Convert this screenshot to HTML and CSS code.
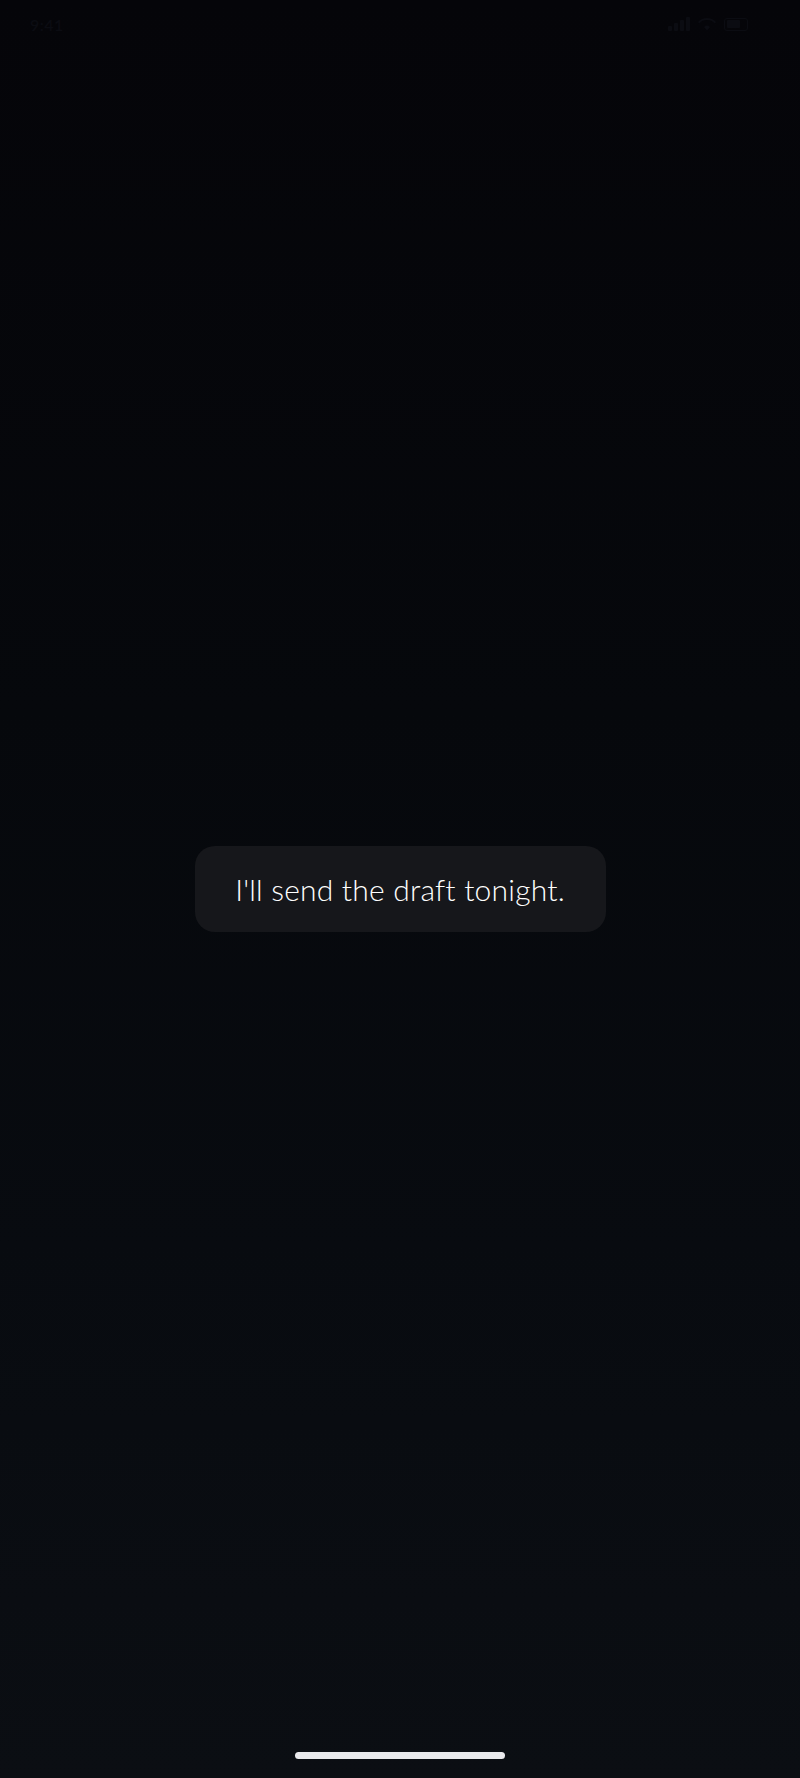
FILE: index.html
```html
<!DOCTYPE html>
<html lang="en">
<head>
<meta charset="utf-8">
<title>Message</title>
<link rel="stylesheet" href="styles.css">
</head>
<body>
<div class="screen">
  <header class="status-bar">
    <span class="time">9:41</span>
    <div class="status-icons">
      <svg class="signal" width="22" height="14" viewBox="0 0 22 14"><rect x="0" y="9" width="4" height="5" rx="1"/><rect x="6" y="6" width="4" height="8" rx="1"/><rect x="12" y="3" width="4" height="11" rx="1"/><rect x="18" y="0" width="4" height="14" rx="1"/></svg>
      <svg class="wifi" width="18" height="14" viewBox="0 0 18 14"><path d="M9 13.5l3-3.6a4.6 4.6 0 0 0-6 0z"/><path d="M9 3a10 10 0 0 1 7.8 3.4l1.2-1.3A12 12 0 0 0 9 1 12 12 0 0 0 0 5.1l1.2 1.3A10 10 0 0 1 9 3z"/></svg>
      <div class="battery"><div class="battery-level"></div></div>
    </div>
  </header>
  <main class="content">
    <div class="bubble">I'll send the draft tonight.</div>
  </main>
  <footer class="home-area">
    <div class="home-indicator"></div>
  </footer>
</div>
</body>
</html>
```
FILE: styles.css
```css
* { box-sizing: border-box; }
html, body { margin: 0; padding: 0; }
body {
  background: #050509;
  font-family: "Lato", "Noto Sans", sans-serif;
}
.screen {
  height: 1778px;
  display: flex;
  flex-direction: column;
  background: linear-gradient(180deg, #050509 0%, #06080c 40%, #080b10 70%, #0b0e13 100%);
}
.status-bar {
  height: 48px;
  display: flex;
  align-items: center;
  justify-content: space-between;
  padding: 0 52px 0 30px;
  color: #0b0c12;
}
.time {
  font-size: 16px;
  font-weight: 600;
  letter-spacing: 0.5px;
}
.status-icons {
  display: flex;
  align-items: center;
  gap: 8px;
  fill: #0b0c12;
}
.battery {
  width: 24px;
  height: 13px;
  border: 1.5px solid #0b0c12;
  border-radius: 3px;
  padding: 1.5px;
}
.battery-level {
  width: 70%;
  height: 100%;
  background: #0b0c12;
  border-radius: 1px;
}
.content {
  flex: 1;
  display: flex;
  align-items: center;
  justify-content: center;
}
.bubble {
  width: 411px;
  height: 86px;
  border-radius: 20px;
  background: #16171b;
  color: #ffffff;
  font-size: 30px;
  font-weight: 300;
  display: flex;
  align-items: center;
  justify-content: center;
  letter-spacing: 0.2px;
}
.home-area {
  height: 48px;
  display: flex;
  justify-content: center;
  padding-top: 22px;
}
.home-indicator {
  width: 210px;
  height: 7px;
  border-radius: 4px;
  background: #e9e9ec;
}
```
